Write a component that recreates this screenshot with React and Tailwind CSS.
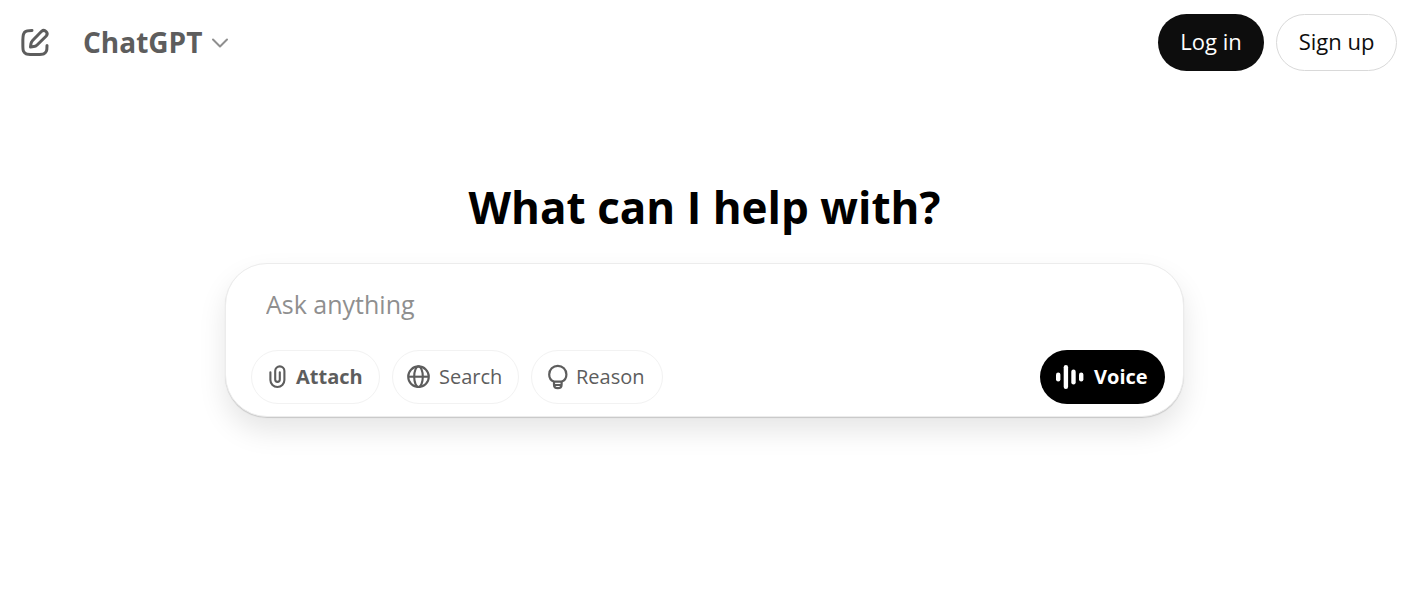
import React from 'react';

const EditIcon = () => (
  <svg className="size-9" viewBox="0 0 24 24" fill="none" stroke="currentColor" strokeWidth="2" strokeLinecap="round" strokeLinejoin="round" aria-hidden="true">
    <path d="M10 3.6C6.8 3.7 6.2 3.8 5.6 4.4C4.2 5.2 3.9 6.6 3.9 10V13.2C3.9 16 3.9 16.6 4.3 17.4C4.7 18.2 5.3 18.8 6.1 19.2C6.9 19.6 7.6 19.6 10.4 19.6H13.6C16.4 19.6 17 19.6 17.8 19.2C18.6 18.8 19.2 18.2 19.6 17.4C20 16.6 20 16 20 13.6" />
    <path d="M16.4 4.2a2.2 2.2 0 0 1 3.1 3.1L13.4 13.3C12.8 13.9 12 14.3 11.2 14.4L9 14.7L9.3 12.5C9.4 11.7 9.8 10.9 10.4 10.3Z" />
  </svg>
);

const ChevronIcon = () => (
  <svg className="h-5 w-5" viewBox="0 0 20 20" fill="none" stroke="currentColor" strokeWidth="2" strokeLinecap="round" strokeLinejoin="round" aria-hidden="true">
    <path d="M3 7.5l7 7 7-7" />
  </svg>
);

const ClipIcon = () => (
  <svg className="h-6 w-5" viewBox="0 0 20 24" fill="none" stroke="currentColor" strokeWidth="2.1" strokeLinecap="round" aria-hidden="true">
    <path d="M2.4 7.2v7.8a7 7 0 0 0 14 0V6a4.6 4.6 0 0 0-9.2 0v8.6a2.3 2.3 0 0 0 4.6 0V7.2" />
  </svg>
);

const GlobeIcon = () => (
  <svg className="size-6" viewBox="0 0 24 24" fill="none" stroke="currentColor" strokeWidth="2.1" aria-hidden="true">
    <circle cx="11.5" cy="11.7" r="10.3" />
    <ellipse cx="11.5" cy="11.7" rx="4.3" ry="10.3" />
    <path d="M1.2 11.7h20.6" />
  </svg>
);

const BulbIcon = () => (
  <svg className="h-[26px] w-5" viewBox="0 0 20 26" fill="none" stroke="currentColor" strokeWidth="2.2" strokeLinejoin="round" aria-hidden="true">
    <path d="M6 17.6C3 16.4 1.2 13.6 1.2 10.4a8.6 8.6 0 0 1 17.2 0c0 3.2-1.8 6-4.8 7.2Z" />
    <path d="M6 17.6v3.2c0 2.2 1.4 3.4 3.8 3.4s3.8-1.2 3.8-3.4v-3.2M6 21h7.6" />
  </svg>
);

const VoiceIcon = () => (
  <svg className="h-6 w-7" viewBox="0 0 28 24" fill="currentColor" aria-hidden="true">
    <rect x="0" y="7.5" width="4.4" height="9" rx="2.2" />
    <rect x="7.7" y="0" width="4.4" height="24" rx="2.2" />
    <rect x="15.3" y="4.5" width="4.4" height="15" rx="2.2" />
    <rect x="23" y="7.5" width="4.4" height="9" rx="2.2" />
  </svg>
);

const tools = [
  { label: 'Attach', icon: <ClipIcon />, className: 'w-[129px] pl-4 font-bold' },
  { label: 'Search', icon: <GlobeIcon />, className: 'w-[127px] pl-3.5' },
  { label: 'Reason', icon: <BulbIcon />, className: 'w-[132px] pl-4' },
];

const Header = () => (
  <header className="flex items-center justify-between pt-3.5 pr-3 pl-4">
    <div className="flex items-center gap-[30px] text-[#5d5d5d]">
      <button type="button" aria-label="New chat" className="pl-px">
        <EditIcon />
      </button>
      <button type="button" className="flex items-center gap-2 pb-0.5 text-[28px] leading-9 font-bold">
        ChatGPT
        <span className="text-[#8f8f8f]">
          <ChevronIcon />
        </span>
      </button>
    </div>
    <div className="flex gap-3 text-[22px]">
      <button type="button" className="h-[57px] w-[106px] rounded-full bg-[#0d0d0d] pb-0.5 text-white">
        Log in
      </button>
      <button type="button" className="h-[57px] w-[121px] rounded-full border border-[#d9d9d9] pb-0.5 text-[#0d0d0d]">
        Sign up
      </button>
    </div>
  </header>
);

const Composer = () => (
  <form className="mt-6 w-full max-w-[959px] rounded-[42px] border border-[#ececec] bg-white px-[25px] pt-[18px] pb-3 shadow-[0_14px_28px_rgba(0,0,0,0.1),0_1px_1px_rgba(0,0,0,0.15)]">
    <input
      type="text"
      aria-label="Message"
      placeholder="Ask anything"
      className="block h-11 w-full px-[15px] text-[25px] outline-none placeholder:text-[#8f8f8f]"
    />
    <div className="mt-6 flex items-center gap-3 text-[20px] text-[#5d5d5d]">
      {tools.map((tool) => (
        <button
          key={tool.label}
          type="button"
          className={`flex h-[54px] items-center gap-2 rounded-full border border-[#f2f2f2] ${tool.className}`}
        >
          {tool.icon}
          {tool.label}
        </button>
      ))}
      <button type="button" className="-mr-[7px] ml-auto flex h-[54px] w-[125px] items-center gap-2.5 rounded-full bg-black pl-4 font-bold text-white">
        <VoiceIcon />
        Voice
      </button>
    </div>
  </form>
);

const App = () => (
  <div className="min-h-screen bg-white font-['Open_Sans',sans-serif]">
    <Header />
    <main className="flex flex-col items-center px-4 pt-[104px]">
      <h1 className="text-[44px] leading-[64px] font-bold text-black">What can I help with?</h1>
      <Composer />
    </main>
  </div>
);

export default App;
